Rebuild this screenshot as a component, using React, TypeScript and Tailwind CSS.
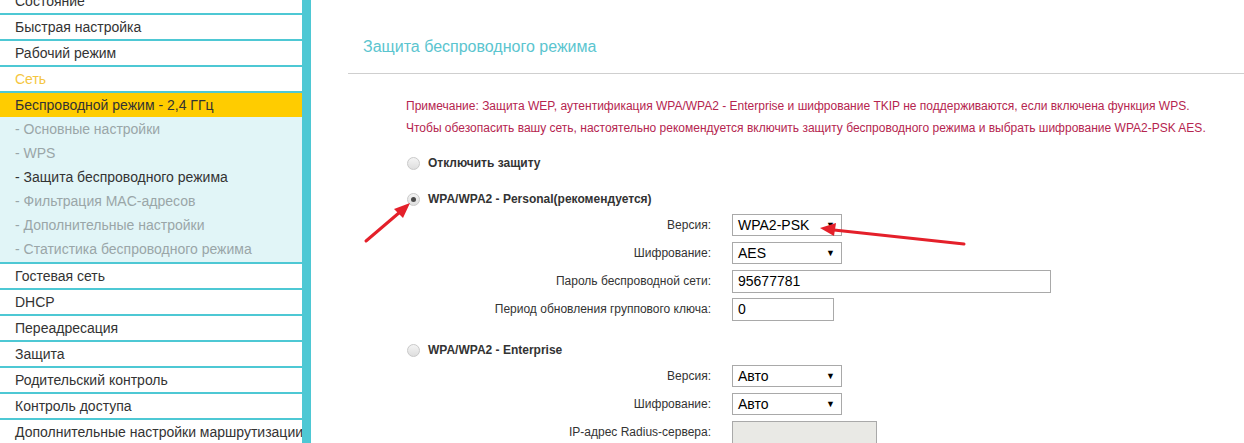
import React from 'react';

// Sidebar menu items of the router web UI
const topItems = ['Состояние', 'Быстрая настройка', 'Рабочий режим'];
const subItems = [
  { label: '- Основные настройки', active: false },
  { label: '- WPS', active: false },
  { label: '- Защита беспроводного режима', active: true },
  { label: '- Фильтрация MAC-адресов', active: false },
  { label: '- Дополнительные настройки', active: false },
  { label: '- Статистика беспроводного режима', active: false },
];
const bottomItems = [
  'Гостевая сеть',
  'DHCP',
  'Переадресация',
  'Защита',
  'Родительский контроль',
  'Контроль доступа',
  'Дополнительные настройки маршрутизации',
];

function Radio({ checked = false }: { checked?: boolean }) {
  return (
    <span className="flex h-[13px] w-[13px] items-center justify-center rounded-full border border-[#c9c9c9] bg-gradient-to-b from-[#f4f4f4] to-[#dedede]">
      {checked && <span className="h-[5px] w-[5px] rounded-full bg-[#4a4a4a]" />}
    </span>
  );
}

function Select({ value, width }: { value: string; width: string }) {
  return (
    <div className={`flex h-[22px] items-center justify-between border border-[#a9a9a9] bg-white pl-[5px] pr-[6px] text-[14px] text-black ${width}`}>
      <span>{value}</span>
      <span className="text-[9px] leading-none">▼</span>
    </div>
  );
}

function Row({ label, children }: { label: string; children: React.ReactNode }) {
  return (
    <div className="flex h-[28px] items-center">
      <div className="w-[365px] pr-[2px] text-right text-[12px] text-[#333]">{label}</div>
      <div className="ml-[19px]">{children}</div>
    </div>
  );
}

function MenuItem({ label, color = 'text-[#333]' }: { label: string; color?: string }) {
  return (
    <div className={`flex h-[24px] items-center overflow-hidden whitespace-nowrap bg-white pl-[15px] pt-[1px] text-[14px] ${color}`}>
      {label}
    </div>
  );
}

export default function App() {
  return (
    <div className="relative flex h-[443px] w-[1244px] overflow-hidden bg-white font-['Liberation_Sans',Arial,sans-serif]">
      {/* Sidebar */}
      <aside className="-mt-[11px] flex w-[311px] shrink-0 flex-col gap-[2px] self-start border-r-[9px] border-[#4ec8d4] bg-[#4ec8d4]">
        {topItems.map((t) => (
          <MenuItem key={t} label={t} />
        ))}
        <MenuItem label="Сеть" color="text-[#f5c640]" />
        <div>
          <div className="flex h-[24px] items-center bg-[#ffcc00] pl-[15px] pt-[1px] text-[14px] text-[#333]">
            Беспроводной режим - 2,4 ГГц
          </div>
          <div className="bg-[#e1f5f7] pb-[1px]">
            {subItems.map((s) => (
              <div
                key={s.label}
                className={`flex h-[24px] items-center pl-[15px] pt-[1px] text-[14px] ${s.active ? 'text-[#333]' : 'text-[#9aa6a8]'}`}
              >
                {s.label}
              </div>
            ))}
          </div>
        </div>
        {bottomItems.map((t) => (
          <MenuItem key={t} label={t} />
        ))}
      </aside>

      {/* Main content */}
      <main className="flex-1 pl-[37px] pt-[21px]">
        <div className="flex h-[53px] items-center border-b border-[#cfcfcf] pl-[15px] text-[16px] text-[#5bc5cf]">
          Защита беспроводного режима
        </div>

        <div className="mt-[21px] pl-[58px] text-[12px] leading-[22px] text-[#b5254f]">
          <div>Примечание: Защита WEP, аутентификация WPA/WPA2 - Enterprise и шифрование TKIP не поддерживаются, если включена функция WPS.</div>
          <div>Чтобы обезопасить вашу сеть, настоятельно рекомендуется включить защиту беспроводного режима и выбрать шифрование WPA2-PSK AES.</div>
        </div>

        <div className="mt-[12px] flex h-[24px] items-center gap-[8px] pl-[59px] text-[12px] font-bold text-[#333]">
          <Radio />
          <span>Отключить защиту</span>
        </div>

        <div className="mt-[12px] flex h-[24px] items-center gap-[8px] pl-[59px] text-[12px] font-bold text-[#333]">
          <Radio checked />
          <span>WPA/WPA2 - Personal(рекомендуется)</span>
        </div>

        <Row label="Версия:">
          <Select value="WPA2-PSK" width="w-[110px]" />
        </Row>
        <Row label="Шифрование:">
          <Select value="AES" width="w-[110px]" />
        </Row>
        <Row label="Пароль беспроводной сети:">
          <div className="flex h-[23px] w-[319px] items-center border border-[#a9a9a9] pl-[5px] text-[14px] text-black">95677781</div>
        </Row>
        <Row label="Период обновления группового ключа:">
          <div className="flex h-[23px] w-[102px] items-center border border-[#a9a9a9] pl-[5px] text-[14px] text-black">0</div>
        </Row>

        <div className="mt-[15px] flex h-[24px] items-center gap-[8px] pl-[59px] text-[12px] font-bold text-[#333]">
          <Radio />
          <span>WPA/WPA2 - Enterprise</span>
        </div>

        <Row label="Версия:">
          <Select value="Авто" width="w-[110px]" />
        </Row>
        <Row label="Шифрование:">
          <Select value="Авто" width="w-[110px]" />
        </Row>
        <Row label="IP-адрес Radius-сервера:">
          <div className="h-[23px] w-[145px] border border-[#a9a9a9] bg-[#e9e9e5]" />
        </Row>
      </main>

      {/* Red annotation arrows */}
      <svg className="pointer-events-none absolute left-0 top-0" width="1244" height="443">
        <line x1="366" y1="241" x2="400" y2="212" stroke="#e4202a" strokeWidth="3" strokeLinecap="round" />
        <polygon points="410,203 394,209 403,218" fill="#e4202a" />
        <line x1="964" y1="244" x2="834" y2="230" stroke="#e4202a" strokeWidth="3" strokeLinecap="round" />
        <polygon points="820,228 836,223 834,236" fill="#e4202a" />
      </svg>
    </div>
  );
}
